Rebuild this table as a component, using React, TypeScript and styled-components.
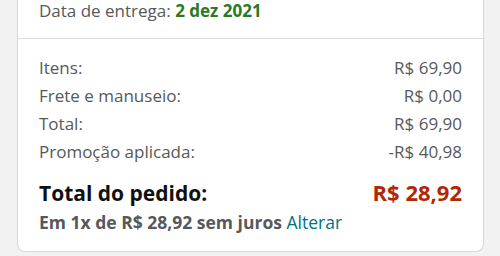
import React from 'react';
import styled, { createGlobalStyle } from 'styled-components';

const GlobalStyle = createGlobalStyle`
  html, body {
    margin: 0;
    padding: 0;
    background: #f2f2f2;
    font-family: "Open Sans", "Noto Sans", sans-serif;
  }
`;

const Page = styled.div`
  padding: 0 16px 5px 17px;
`;

const Card = styled.div`
  background: #ffffff;
  border: 1px solid #d5d9d9;
  border-top: none;
  border-radius: 0 0 8px 8px;
`;

const Section = styled.div<{ $divider?: boolean }>`
  padding: ${(p) => (p.$divider ? '15px 21px 18px 21px' : '0 21px 16px 21px')};
  border-top: ${(p) => (p.$divider ? '1px solid #dddddd' : 'none')};
`;

const Delivery = styled.div`
  font-size: 17px;
  line-height: 22px;
  color: #565959;
`;

const Green = styled.span`
  color: #2b7a1f;
  font-weight: 700;
`;

const Row = styled.div`
  display: flex;
  justify-content: space-between;
  font-size: 17px;
  line-height: 28px;
  color: #565959;
`;

const TotalRow = styled.div`
  display: flex;
  justify-content: space-between;
  align-items: baseline;
  margin-top: 12px;
  font-size: 21px;
  line-height: 28px;
  font-weight: 700;
  color: #0f1111;
`;

const Price = styled.span`
  color: #b12704;
  font-size: 22px;
`;

const Installments = styled.div`
  margin-top: 4px;
  font-size: 17.5px;
  line-height: 22px;
  font-weight: 700;
  color: #565959;
`;

const Link = styled.a`
  font-weight: 400;
  color: #007185;
  text-decoration: none;
`;

const lines = [
  ['Itens:', 'R$ 69,90'],
  ['Frete e manuseio:', 'R$ 0,00'],
  ['Total:', 'R$ 69,90'],
  ['Promoção aplicada:', '-R$ 40,98'],
];

export default function App() {
  return (
    <>
      <GlobalStyle />
      <Page>
        <Card>
          <Section>
            <Delivery>
              Data de entrega: <Green>2 dez 2021</Green>
            </Delivery>
          </Section>
          <Section $divider>
            {lines.map(([label, value]) => (
              <Row key={label}>
                <span>{label}</span>
                <span>{value}</span>
              </Row>
            ))}
            <TotalRow>
              <span>Total do pedido:</span>
              <Price>R$ 28,92</Price>
            </TotalRow>
            <Installments>
              Em 1x de R$ 28,92 sem juros <Link href="#">Alterar</Link>
            </Installments>
          </Section>
        </Card>
      </Page>
    </>
  );
}
